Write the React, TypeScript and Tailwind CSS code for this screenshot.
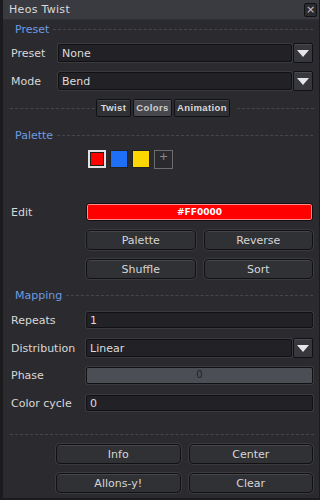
import React from 'react';

const font = { fontFamily: '"DejaVu Sans", "Liberation Sans", sans-serif' };

const SectionHeader = ({ title, className }: { title: string; className?: string }) => (
  <div className={`flex items-center h-4 pl-[15px] pr-[6px] gap-1 ${className ?? ''}`}>
    <span className="text-[11px] text-[#6b9be0] leading-none">{title}</span>
    <div className="flex-1 border-t border-dashed border-[#46474c]" />
  </div>
);

const Field = ({ value, className }: { value: string; className?: string }) => (
  <div
    className={`flex items-center h-full bg-[#222226] border border-[#111113] rounded-[2px] shadow-[0_0_0_1px_#3a3a3f] px-[3px] text-[11px] text-[#dcdcdc] leading-none ${className ?? ''}`}
  >
    {value}
  </div>
);

const Arrow = () => (
  <div className="w-[20px] h-[20px] flex items-center justify-center bg-[#37383d] border border-[#111113] rounded-[2px] shadow-[inset_0_1px_0_#4a4b50]">
    <svg width="12" height="7" viewBox="0 0 12 7">
      <path d="M0 0 H12 L6 7 Z" fill="#e6e6e6" />
    </svg>
  </div>
);

const Btn = ({ label, className }: { label: string; className?: string }) => (
  <div
    className={`flex items-center justify-center bg-[#303135] border border-[#111113] rounded-[4px] shadow-[inset_0_1px_0_#45464b,0_0_0_1px_#3a3a3f] text-[11px] text-[#d6d6d6] leading-none ${className ?? ''}`}
  >
    {label}
  </div>
);

function clsxLite(...parts: (string | undefined)[]) {
  return parts.filter(Boolean).join(' ');
}

const Tab = ({ label, active, className }: { label: string; active?: boolean; className?: string }) => (
  <div
    className={clsxLite(
      'h-[18px] flex items-center justify-center border border-[#111113] rounded-[2px] tracking-[0.4px]',
      active
        ? 'bg-[#47484e] text-[#d0d0d0] shadow-[inset_0_1px_0_#5a5b60]'
        : 'bg-[#303135] text-[#dadada] shadow-[inset_0_1px_0_#46474c]',
      className,
    )}
  >
    {label}
  </div>
);

const Row = ({ label, children, className }: { label: string; children: React.ReactNode; className?: string }) => (
  <div className={`flex items-center ${className ?? ''}`}>
    <span className="w-[75px] pl-[11px] text-[11px] text-[#d8d8d8] leading-none shrink-0">{label}</span>
    {children}
  </div>
);

export default function App() {
  return (
    <div style={font} className="w-[320px] h-[500px] bg-[#2b2b2f] border-l-[3px] border-r border-b-[2px] border-[#1b1b1d] flex flex-col overflow-hidden">
      {/* Title bar */}
      <div className="h-[20px] -ml-[3px] bg-[#3a3b41] flex items-center justify-between pl-[9px] pr-[2px] shrink-0 border-b border-[#2f3035]">
        <span className="text-[11px] text-[#dadada] leading-none tracking-[0.3px]">Heos Twist</span>
        <div className="w-[13px] h-[14px] bg-[#2b2b30] border border-[#111113] rounded-[2px] flex items-center justify-center text-[11px] text-[#c8c8c8] leading-none">
          ×
        </div>
      </div>

      {/* Preset */}
      <SectionHeader title="Preset" className="mt-[1px] -ml-[3px]" />
      <div className="flex items-center h-[20px] mt-[6px] -ml-[3px] pr-[6px]">
        <span className="w-[58px] pl-[11px] text-[11px] text-[#d8d8d8] leading-none">Preset</span>
        <div className="flex-1 h-[18px]"><Field value="None" /></div>
        <div className="ml-[1px]"><Arrow /></div>
      </div>
      <div className="flex items-center h-[20px] mt-[8px] -ml-[3px] pr-[6px]">
        <span className="w-[58px] pl-[11px] text-[11px] text-[#d8d8d8] leading-none">Mode</span>
        <div className="flex-1 h-[18px]"><Field value="Bend" /></div>
        <div className="ml-[1px]"><Arrow /></div>
      </div>

      {/* Tabs */}
      <div className="flex items-center h-[18px] mt-[8px] -ml-[3px] pr-[5px]">
        <div className="w-[85px] ml-[10px] border-t border-dashed border-[#46474c]" />
        <div className="flex gap-[2px] ml-[1px] text-[9.5px] font-bold leading-none font-['Liberation_Sans',sans-serif]">
          <Tab label="Twist" className="w-[35px]" />
          <Tab label="Colors" active className="w-[39px]" />
          <Tab label="Animation" className="w-[56px]" />
        </div>
        <div className="flex-1 ml-[7px] border-t border-dashed border-[#46474c]" />
      </div>

      {/* Palette */}
      <SectionHeader title="Palette" className="mt-[10px] -ml-[3px]" />
      <div className="flex gap-[4px] mt-[7px] ml-[85px] h-[18px]">
        <div className="w-[18px] h-[18px] border-[2px] border-[#e2e2e2] shadow-[inset_0_0_0_1px_#1a1a1a] bg-[#ff0000]" />
        <div className="w-[18px] h-[18px] border border-[#222225] bg-[#1e6ff5]" />
        <div className="w-[18px] h-[18px] border border-[#222225] bg-[#ffd700]" />
        <div className="w-[19px] h-[19px] border border-[#6c6c6e] bg-[#2a2a2e] flex justify-center text-[11px] text-[#8a8a8c] leading-[11px]">+</div>
      </div>

      {/* Edit */}
      <Row label="Edit" className="mt-[35px] -ml-[3px] pr-[6px] h-[18px]">
        <div className="ml-[11px] flex-1 h-[18px] flex items-center justify-center bg-[#ff0000] border border-[#111113] rounded-[3px] shadow-[inset_0_0_0_1px_#ff8c8c] text-[9px] font-bold text-white leading-none">
          #FF0000
        </div>
      </Row>
      <div className="grid grid-cols-2 gap-x-[8px] gap-y-[9px] mt-[9px] ml-[83px] mr-[6px]">
        <Btn label="Palette" className="h-[20px]" />
        <Btn label="Reverse" className="h-[20px]" />
        <Btn label="Shuffle" className="h-[20px]" />
        <Btn label="Sort" className="h-[20px]" />
      </div>

      {/* Mapping */}
      <SectionHeader title="Mapping" className="mt-[8px] -ml-[3px]" />
      <Row label="Repeats" className="mt-[9px] -ml-[3px] pr-[6px] h-[16px]">
        <div className="ml-[11px] flex-1 h-[16px]"><Field value="1" /></div>
      </Row>
      <Row label="Distribution" className="mt-[10px] -ml-[3px] pr-[6px] h-[20px]">
        <div className="ml-[11px] flex-1 h-[18px]"><Field value="Linear" /></div>
        <div className="ml-[1px]"><Arrow /></div>
      </Row>
      <Row label="Phase" className="mt-[8px] -ml-[3px] pr-[6px] h-[18px]">
        <div className="ml-[11px] flex-1 h-[17px] flex items-center justify-center bg-[#4c4e55] border border-[#111113] rounded-[2px] shadow-[0_0_0_1px_#3a3a3f] text-[10px] text-[#222226] leading-none">
          0
        </div>
      </Row>
      <Row label="Color cycle" className="mt-[11px] -ml-[3px] pr-[6px] h-[16px]">
        <div className="ml-[11px] flex-1 h-[16px]"><Field value="0" /></div>
      </Row>

      <div className="mt-[23px] ml-[7px] mr-[5px] border-t border-dashed border-[#46474c]" />

      <div className="grid grid-cols-2 gap-x-[8px] gap-y-[9px] mt-[9px] ml-[53px] mr-[6px]">
        <Btn label="Info" className="h-[20px]" />
        <Btn label="Center" className="h-[20px]" />
        <Btn label="Allons-y!" className="h-[20px]" />
        <Btn label="Clear" className="h-[20px]" />
      </div>
    </div>
  );
}
